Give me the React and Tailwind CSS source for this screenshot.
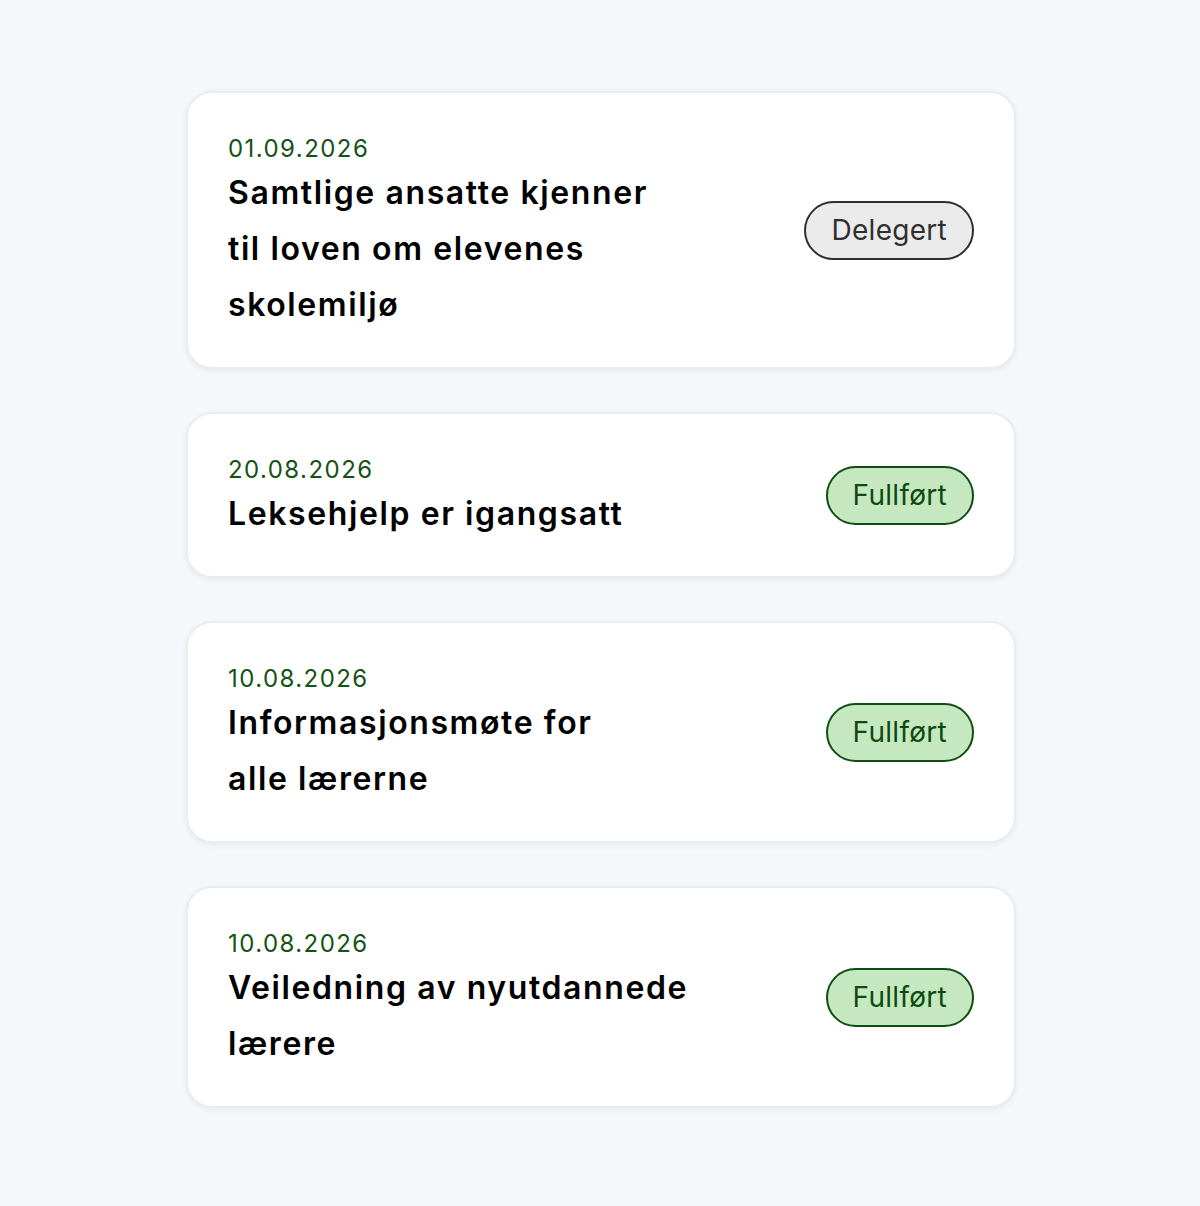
import React from "react";

const items = [
  {
    date: "01.09.2026",
    lines: ["Samtlige ansatte kjenner", "til loven om elevenes", "skolemiljø"],
    status: "Delegert",
  },
  { date: "20.08.2026", lines: ["Leksehjelp er igangsatt"], status: "Fullført" },
  { date: "10.08.2026", lines: ["Informasjonsmøte for", "alle lærerne"], status: "Fullført" },
  { date: "10.08.2026", lines: ["Veiledning av nyutdannede", "lærere"], status: "Fullført" },
];

function Badge({ status }) {
  if (status === "Fullført") {
    return (
      <span className="inline-flex h-[59px] items-center rounded-full border-2 border-[#0f4d12] bg-[#c6e8c0] px-[25px] text-[28px] tracking-[0.01em] text-[#0c4a10]">
        {status}
      </span>
    );
  }
  return (
    <span className="inline-flex h-[59px] items-center rounded-full border-2 border-[#2f2f2f] bg-[#ebebeb] px-[25px] text-[28px] tracking-[0.01em] text-[#2f2f2f]">
      {status}
    </span>
  );
}

export default function App() {
  return (
    <div
      className="min-h-screen bg-[#f4f8fb] pt-[91px] pb-[98px]"
      style={{ fontFamily: "Inter, 'Noto Sans', sans-serif" }}
    >
      <div className="mx-auto flex w-[830px] translate-x-[1px] flex-col gap-[43px]">
        {items.map((item, i) => (
          <div
            key={i}
            className="flex items-center justify-between rounded-[26px] border-2 border-[#eaedf0] bg-white px-10 py-[37px] shadow-[0_2px_6px_rgba(0,0,0,0.06)]"
          >
            <div className="pt-[3px]">
              <div className="text-[24px] leading-[32px] tracking-[0.06em] text-[#165216]">{item.date}</div>
              <div className="-mb-[3px] text-[32px] font-semibold leading-[56px] tracking-[0.05em] text-black">
                {item.lines.map((l, j) => (
                  <div key={j}>{l}</div>
                ))}
              </div>
            </div>
            <Badge status={item.status} />
          </div>
        ))}
      </div>
    </div>
  );
}
